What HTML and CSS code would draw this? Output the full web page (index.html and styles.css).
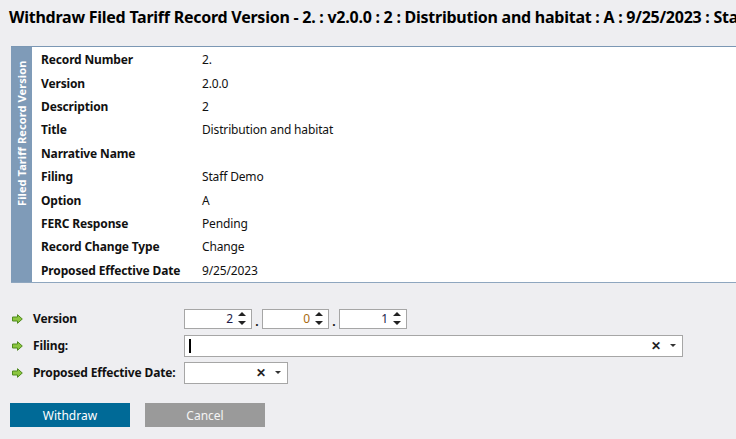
FILE: index.html
```html
<html lang="en">
<head>
  <meta charset="UTF-8">
  <title>Withdraw Filed Tariff Record Version</title>
  <link rel="stylesheet" href="styles.css">
</head>
<body>

<div class="title_bar">
  <h1 class="page_title">Withdraw Filed Tariff Record Version - 2. : v2.0.0 : 2 : Distribution and habitat : A : 9/25/2023 : Staff Demo</h1>
</div>

<div class="record_panel">
  <div class="record_side"><span>Filed Tariff Record Version</span></div>
  <table class="record_table">
    <tr><th>Record Number</th><td>2.</td></tr>
    <tr><th>Version</th><td>2.0.0</td></tr>
    <tr><th>Description</th><td>2</td></tr>
    <tr><th>Title</th><td>Distribution and habitat</td></tr>
    <tr><th>Narrative Name</th><td></td></tr>
    <tr><th>Filing</th><td>Staff Demo</td></tr>
    <tr><th>Option</th><td>A</td></tr>
    <tr><th>FERC Response</th><td>Pending</td></tr>
    <tr><th>Record Change Type</th><td>Change</td></tr>
    <tr><th>Proposed Effective Date</th><td>9/25/2023</td></tr>
  </table>
</div>

<div class="form">
  <div class="form_row">
    <label class="form_label"><svg class="req" viewBox="0 0 11 10"><path d="M0.5 3H5.5V0.7L10.3 5L5.5 9.3V7H0.5Z"/></svg>Version</label>
    <div class="version_group">
      <div class="spin"><span class="spin_val">2</span><span class="spin_btns"><i class="up"></i><i class="down"></i></span></div>
      <span class="dot">.</span>
      <div class="spin spin--mid"><span class="spin_val zero">0</span><span class="spin_btns"><i class="up"></i><i class="down"></i></span></div>
      <span class="dot">.</span>
      <div class="spin"><span class="spin_val">1</span><span class="spin_btns"><i class="up"></i><i class="down"></i></span></div>
    </div>
  </div>
  <div class="form_row">
    <label class="form_label"><svg class="req" viewBox="0 0 11 10"><path d="M0.5 3H5.5V0.7L10.3 5L5.5 9.3V7H0.5Z"/></svg>Filing:</label>
    <div class="combo combo--wide"><span class="caret"></span><span class="clear">&#x2715;</span><span class="arrow"></span></div>
  </div>
  <div class="form_row">
    <label class="form_label"><svg class="req" viewBox="0 0 11 10"><path d="M0.5 3H5.5V0.7L10.3 5L5.5 9.3V7H0.5Z"/></svg>Proposed Effective Date:</label>
    <div class="combo combo--date"><span class="clear">&#x2715;</span><span class="arrow"></span></div>
  </div>
</div>

<div class="actions">
  <button class="btn btn--primary">Withdraw</button>
  <button class="btn btn--disabled">Cancel</button>
</div>

</body>
</html>
```

FILE: styles.css
```css
* {
  padding: 0;
  margin: 0;
  box-sizing: border-box;
}

body {
  background: #eeeef1;
  font-family: 'Noto Sans', 'Open Sans', sans-serif;
  font-size: 12px;
  color: #111;
  overflow: hidden;
  width: 736px;
  height: 439px;
}

.title_bar {
  height: 46px;
  overflow: hidden;
  padding: 6px 0 0 9px;
}

.page_title {
  font-size: 16px;
  font-weight: bold;
  white-space: nowrap;
  color: #000;
  letter-spacing: -0.25px;
}

.record_panel {
  display: flex;
  margin-left: 11px;
  height: 237px;
  background: #fff;
  border-top: 1px solid #7b97b4;
  border-bottom: 1px solid #8ea6bf;
}

.record_side {
  width: 21px;
  flex: none;
  background: #7f9bb8;
  color: #fff;
  font-weight: bold;
  font-size: 11px;
  position: relative;
}

.record_side span {
  position: absolute;
  left: 3px;
  top: 159px;
  transform: rotate(-90deg);
  transform-origin: 0 0;
  white-space: nowrap;
  line-height: 15px;
  letter-spacing: 0.1px;
}

.record_table {
  border-collapse: collapse;
  margin: 1px 0 0 9px;
  font-size: 12px;
  letter-spacing: -0.15px;
}

.record_table th,
.record_table td {
  height: 23px;
  text-align: left;
  vertical-align: middle;
  white-space: nowrap;
}

.record_table th {
  width: 161px;
  font-weight: bold;
}

.form {
  margin-top: 22px;
}

.form_row {
  display: flex;
  align-items: center;
  height: 27px;
}

.form_label {
  width: 184px;
  font-weight: bold;
  display: flex;
  align-items: center;
  padding-left: 12px;
  letter-spacing: -0.15px;
}

.req {
  width: 11px;
  height: 10px;
  margin-right: 10px;
  fill: #8cc63f;
  stroke: #4f8a1e;
  stroke-width: 1;
  stroke-linejoin: round;
}

.version_group {
  display: flex;
  align-items: center;
}

.spin {
  width: 68px;
  height: 20px;
  background: #fff;
  border: 1px solid #a6a6a6;
  display: flex;
  align-items: center;
  justify-content: flex-end;
}

.spin--mid { width: 67px; }

.spin_val {
  color: #1d1d4a;
  margin-right: 5px;
}

.zero { color: #a86a10; }

.spin_btns {
  display: flex;
  flex-direction: column;
  gap: 5px;
  width: 10px;
  margin-right: 3px;
}

.spin_btns i {
  width: 0;
  height: 0;
  border-left: 4px solid transparent;
  border-right: 4px solid transparent;
}

.spin_btns .up { border-bottom: 4px solid #222; }
.spin_btns .down { border-top: 4px solid #222; }

.dot {
  width: 10px;
  text-align: center;
  padding-top: 6px;
  font-weight: bold;
}

.combo {
  height: 22px;
  background: #fff;
  border: 1px solid #a6a6a6;
  display: flex;
  align-items: center;
  justify-content: flex-end;
  position: relative;
}

.combo--wide { width: 499px; }
.combo--date { width: 104px; }

.caret {
  position: absolute;
  left: 4px;
  top: 3px;
  width: 2px;
  height: 14px;
  background: #000;
}

.clear {
  font-size: 12px;
  font-weight: bold;
  color: #222;
  margin-right: 9px;
}

.arrow {
  width: 0;
  height: 0;
  border-left: 3px solid transparent;
  border-right: 3px solid transparent;
  border-top: 3px solid #333;
  margin-right: 6px;
}

.actions {
  display: flex;
  gap: 15px;
  margin: 17px 0 0 10px;
}

.btn {
  width: 120px;
  height: 24px;
  border: none;
  font-family: 'Noto Sans', 'Open Sans', sans-serif;
  font-size: 12px;
  color: #fff;
}

.btn--primary { background: #006a97; }
.btn--disabled { background: #9a9a9a; color: #f4f4f4; }
```
